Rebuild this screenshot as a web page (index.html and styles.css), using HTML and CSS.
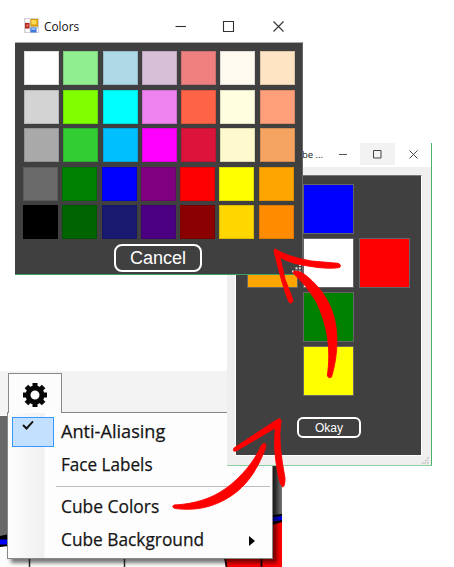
FILE: index.html
```html
<!DOCTYPE html>
<html lang="en">
<head>
<meta charset="utf-8">
<title>Colors</title>
<link rel="stylesheet" href="styles.css">
</head>
<body>
<main class="desktop">
  <section class="app">
    <svg class="scene" width="282" height="196" viewBox="0 0 282 196" aria-hidden="true">
      <defs><linearGradient id="wall"><stop offset="0" stop-color="#383838"/><stop offset="1" stop-color="#707070"/></linearGradient></defs>
      <rect width="282" height="196" fill="#fdfdfd"/>
      <rect width="282" height="44" fill="#f3f3f3"/>
      <rect y="45" width="9" height="121" fill="#686868"/>
      <path d="M0 165l9-2v12l-9 1z" fill="#000"/>
      <path d="M0 168.500h9v5H0z" fill="#00f"/>
      <path d="M29.500 186v10M124.500 186v10" stroke="#333" stroke-width="1.500"/>
      <rect x="272" y="44" width="10" height="104" fill="url(#wall)"/>
      <path d="M224 186l49-36h9v46h-56z" fill="red"/>
      <path d="M225 186l1.500 10M261.500 186v10" stroke="#200" stroke-width="1.800"/>
      <path d="M272 144l10-1v8l-10 3z" fill="#000"/>
      <path d="M272 146l10-1v4l-10 2z" fill="#0000d8"/>
    </svg>
    <div class="gear-tab">
      <svg width="24" height="24" viewBox="-12 -12 24 24" aria-hidden="true">
        <circle r="7" fill="none" stroke="#050505" stroke-width="5"/>
        <path d="M0-8.500V-12M0 8.500V12M-8.500 0H-12M8.500 0H12M-6-6l-2.600-2.600M6-6l2.600-2.600M-6 6l-2.600 2.600M6 6l2.600 2.600" stroke="#050505" stroke-width="5"/>
      </svg>
    </div>
    <div class="menu">
      <div class="item"><span class="check"><svg width="12" height="10" viewBox="0 0 12 10"><path d="M1 5l3.500 3.500L11 1.300" fill="none" stroke="#111" stroke-width="1.900"/></svg></span><span class="label anti">Anti-Aliasing</span></div>
      <div class="item"><span class="label face">Face Labels</span></div>
      <div class="rule"></div>
      <div class="item"><span class="label cube">Cube Colors</span></div>
      <div class="item"><span class="label back">Cube Background</span><i class="more"></i></div>
    </div>
  </section>

  <section class="cube-window">
    <header class="cube-title">
      <span class="cube-name">be ...</span>
      <span class="cube-btn"><svg width="9" height="9"><path d="M0 4.500h8" stroke="#555"/></svg></span>
      <span class="cube-btn hover"><svg width="9" height="9"><path d="M.5.500h7.500v7.500H.5z" fill="none" stroke="#444"/></svg></span>
      <span class="cube-btn"><svg width="9" height="9"><path d="M.5.500l8 8m0-8l-8 8" stroke="#444" fill="none"/></svg></span>
    </header>
    <div class="cube-panel">
      <div class="net">
        <b class="face-blue"></b><b class="face-orange"></b><b class="face-white"></b><b class="face-red"></b><b class="face-green"></b><b class="face-yellow"></b>
      </div>
      <button class="okay">Okay</button>
    </div>
    <svg class="grip-light" width="7" height="7"><path d="M5 1h1.500M3 3.500h3.500M0 6h6.500" stroke="#bbb" stroke-width="1.500" stroke-dasharray="1.500 1"/></svg>
  </section>

  <section class="color-window">
    <header class="color-title">
      <svg class="logo" width="15" height="15" viewBox="0 0 15 15" aria-hidden="true">
        <rect width="15" height="15" fill="#d4d4d6"/><path d="M1.500 1h4v3.500h-4zM1.500 10.500h4V14h-4zM12.500 10.500H14V14h-1.500z" fill="#fff"/>
        <rect x="1" y="5" width="4.500" height="5.500" fill="#b82a20"/><rect x="2.500" y="6.500" width="1.800" height="2" fill="#ef8374"/>
        <rect x="6.500" y="1" width="7.500" height="7.500" fill="#d89b08"/><rect x="7.500" y="2" width="5" height="4.500" fill="#ffda55"/>
        <rect x="6.500" y="9.500" width="6" height="5" fill="#3c78d8"/><rect x="7.500" y="10" width="4" height="2" fill="#8fbaff"/>
      </svg>
      <span class="color-name">Colors</span>
      <svg class="controls" width="110" height="13" aria-hidden="true"><g fill="none" stroke="#333" stroke-width="1.100"><path d="M.5 6.500h10.500"/><path d="M48.500 1.500h10v10h-10z"/><path d="M98.500 1.500l10 10m0-10l-10 10"/></g></svg>
    </header>
    <div class="color-panel">
      <div class="swatches">
        <i class="white"></i><i class="lightgreen"></i><i class="lightblue"></i><i class="thistle"></i><i class="lightcoral"></i><i class="floralwhite"></i><i class="bisque"></i>
        <i class="lightgray"></i><i class="chartreuse"></i><i class="cyan"></i><i class="violet"></i><i class="tomato"></i><i class="lightyellow"></i><i class="lightsalmon"></i>
        <i class="darkgray"></i><i class="limegreen"></i><i class="deepskyblue"></i><i class="magenta"></i><i class="crimson"></i><i class="lemonchiffon"></i><i class="sandybrown"></i>
      </div>
      <div class="swatches deep">
        <i class="dimgray"></i><i class="green"></i><i class="blue"></i><i class="purple"></i><i class="red"></i><i class="yellow"></i><i class="orange"></i>
        <i class="black"></i><i class="darkgreen"></i><i class="midnightblue"></i><i class="indigo"></i><i class="darkred"></i><i class="gold"></i><i class="darkorange"></i>
      </div>
      <button class="cancel">Cancel</button>
      <svg class="grip" width="9" height="9"><path d="M7 1h2M3.500 4.200H9M0 7.500h9" stroke="#ddd" stroke-width="2" stroke-dasharray="2 1.300"/></svg>
    </div>
  </section>

  <svg class="arrows" width="454" height="567" viewBox="0 0 454 567" fill="red" stroke="red" stroke-width=".9" stroke-linejoin="round" aria-hidden="true">
    <path d="M174 505C196 504 212 498 225 489C242 477 255 460 261 446Q263 442 265.700 444Q266.500 447 264 452C256 472 246 486 231 496C213 508 194 511 175 508.500Q171 507 174 505Z"/>
    <path d="M234 448L278 419Q281 418 281 421Q279 434 280.500 448Q282 463 285 478Q285 487 282.500 487Q280 485 278 474Q273 450 275.300 428L236 451Q232 452 234 448Z"/>
    <path d="M276 249.500Q288 257 311.700 261L338 263.300Q342 265 339.500 267.500Q332 269 318 267.500Q289 264 280 257L285 279L293 300Q292 305 289 302C283 288 279 271 274 251Q274 248 276 249.500Z"/>
    <path d="M294 271Q300 271 304 274C315 282 325 294 330 306C340 327 338 356 331.500 377Q329 379 327.300 376C331 350 328 326 316 301Q307 286 293 273Z"/>
  </svg>
</main>
</body>
</html>
```
FILE: styles.css
```css
* { box-sizing: border-box; }
body { margin: 0; background: #fff; overflow: hidden; }
button { padding: 0; background: transparent; color: #fff; display: block; }
svg { display: block; flex: none; }
.desktop { position: relative; width: 454px; height: 567px; overflow: hidden; }

/* Settings menu */
.app { position: absolute; left: 0; top: 371px; width: 282px; height: 196px; overflow: hidden; }
.scene { position: absolute; left: 0; top: 0; }
.gear-tab { position: relative; z-index: 2; width: 54px; height: 40px; margin: 2px 0 0 7.500px; border: 1.500px solid #888; border-bottom: 0; background: #fcfcfc; display: flex; justify-content: center; padding-top: 9px; }
.menu { position: relative; width: 266px; height: 147px; margin: -1px 0 0 7px; padding: 3px 0 0 4px; border: 1px solid #888; background: linear-gradient(90deg, #fdfdfd, #f0f0f0 36px, #fdfdfd 37px); box-shadow: 4px 4px 4px #0008; font: 18.500px "Open Sans", sans-serif; color: #151515; }
.item { height: 33px; display: flex; align-items: center; padding-left: 49px; white-space: nowrap; }
.item:first-child { padding-left: 0; }
.check { width: 42px; height: 30px; margin-right: 7px; margin-top: -1px; border: 1.500px solid #3399ff; background: #c4e0ff; padding: 2px 0 0 9px; }
.rule { height: 1px; margin: 4px 2px 4px 44px; background: #bdbdbd; }
.label { transform-origin: left; margin-top: -4px; -webkit-text-stroke: .25px #151515; }
.anti { transform: scaleX(.98); }
.face { transform: scaleX(.925); }
.cube { transform: scaleX(.94); }
.back { transform: scaleX(.935); }
.more { margin-left: auto; margin-right: 17px; border-left: 6px solid #000; border-top: 5.500px solid transparent; border-bottom: 5.500px solid transparent; }

/* Cube window */
.cube-window { position: absolute; left: 227px; top: 143px; width: 205px; height: 323px; background: #efefef; border-right: 1px solid #4caf6b; border-bottom: 1px solid #8ccf9f; }
.cube-title { height: 24px; background: #fff; display: flex; justify-content: flex-end; }
.cube-name { margin-right: 3px; width: 20px; white-space: nowrap; font: 9.500px/24px "Open Sans", sans-serif; color: #222; }
.cube-btn { width: 35px; height: 22px; display: grid; place-items: center; }
.cube-btn:nth-child(2) { padding-left: 1px; }
.cube-btn:last-child { width: 36px; }
.cube-btn.hover { background: #f2f2f2; }
.cube-panel { width: 187px; height: 281px; margin: 8px 0 0 8px; border: 1px solid #fff; border-top-color: #777; background: #404040; padding: 8px 0 0 11px; }
.net { display: grid; grid-template-columns: repeat(3, 51px); grid-template-rows: repeat(4, 50px); column-gap: 5px; row-gap: 4px; }
.net b { border: 1px solid #666; }
.face-blue { grid-area: 1 / 2; background: #00f; }
.face-orange { grid-area: 2 / 1; background: orange; }
.face-white { grid-area: 2 / 2; background: #fff; }
.face-red { grid-area: 2 / 3; background: red; }
.face-green { grid-area: 3 / 2; background: green; }
.face-yellow { grid-area: 4 / 2; background: #ff0; }
.okay { width: 64px; height: 21px; margin: 21px 0 0 50px; border: 2px solid #fff; border-radius: 6px; font: 12px/16px "Liberation Sans", sans-serif; }
.grip-light { position: absolute; right: 2px; bottom: 1px; }

/* Color picker */
.color-window { position: absolute; left: 15px; top: 12px; width: 288px; height: 263px; }
.color-title { height: 30px; background: #fff; display: flex; align-items: center; padding-left: 9px; }
.logo { margin-top: -3px; }
.color-name { margin-left: 5px; width: 38px; margin-top: -1px; font: 12.500px "Open Sans", sans-serif; color: #111; white-space: nowrap; transform: scaleX(.95); transform-origin: left; }
.controls { margin: -2px 0 0 93px; }
.color-panel { position: relative; height: 233px; background: #404040; border-top: 1px solid #a5aba5; border-right: 1px solid #666; border-bottom: 1px solid #40a063; padding: 8px 0 0 9px; }
.swatches { display: grid; grid-template-columns: repeat(7, 35px); grid-auto-rows: 34px; column-gap: 4.300px; row-gap: 4.600px; }
.swatches i { box-shadow: inset 0 0 0 1px #0002; }
.deep { margin: 4.500px 0 0 -1px; row-gap: 4px; }
.cancel { width: 88px; height: 28px; margin: 5px 0 0 90px; border: 2px solid #fff; border-radius: 8px; font: 18px/24px "Liberation Sans", sans-serif; }
.grip { position: absolute; right: 1px; bottom: 1px; }
.white { background: white; } .lightgreen { background: lightgreen; } .lightblue { background: lightblue; }
.thistle { background: thistle; } .lightcoral { background: lightcoral; } .floralwhite { background: floralwhite; }
.bisque { background: bisque; } .lightgray { background: lightgray; } .chartreuse { background: chartreuse; }
.cyan { background: cyan; } .violet { background: violet; } .tomato { background: tomato; }
.lightyellow { background: lightyellow; } .lightsalmon { background: lightsalmon; } .darkgray { background: darkgray; }
.limegreen { background: limegreen; } .deepskyblue { background: deepskyblue; } .magenta { background: magenta; }
.crimson { background: crimson; } .lemonchiffon { background: lemonchiffon; } .sandybrown { background: sandybrown; }
.dimgray { background: dimgray; } .green { background: green; } .blue { background: blue; }
.purple { background: purple; } .red { background: red; } .yellow { background: yellow; } .orange { background: orange; }
.black { background: black; } .darkgreen { background: darkgreen; } .midnightblue { background: midnightblue; }
.indigo { background: indigo; } .darkred { background: darkred; } .gold { background: gold; } .darkorange { background: darkorange; }

.arrows { position: absolute; left: 0; top: 0; pointer-events: none; }
```
